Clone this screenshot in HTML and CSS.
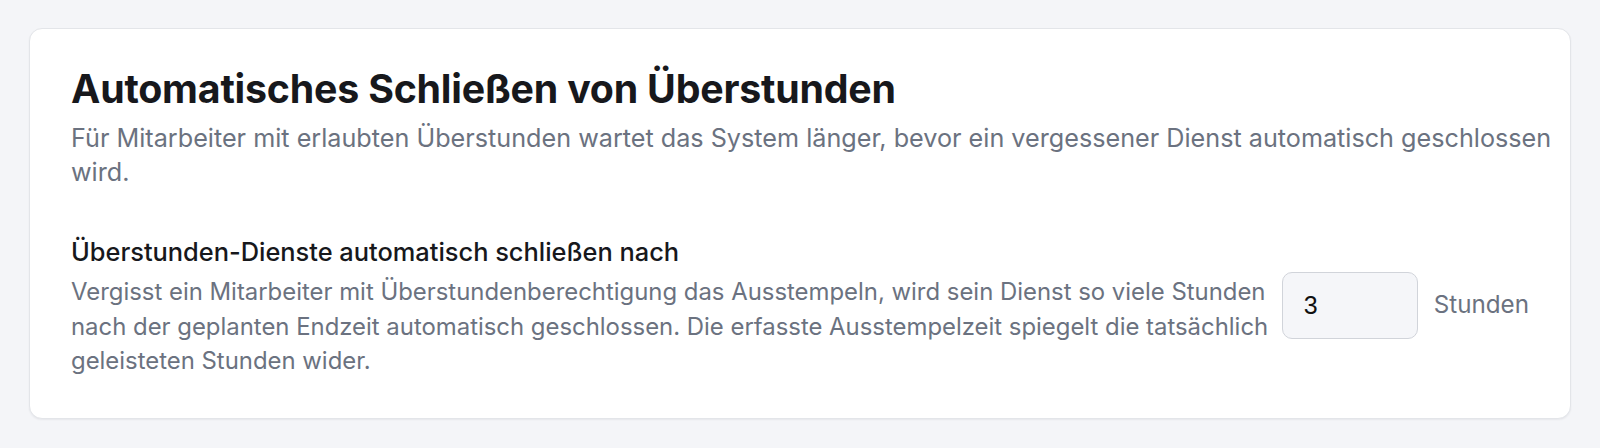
FILE: index.html
```html
<!DOCTYPE html>
<html lang="de">
<head>
<meta charset="utf-8">
<title>Überstunden</title>
<link rel="stylesheet" href="styles.css">
</head>
<body>
  <section class="card">
    <h1 class="card-title">Automatisches Schließen von Überstunden</h1>
    <p class="card-desc">Für Mitarbeiter mit erlaubten Überstunden wartet das System länger, bevor ein vergessener Dienst automatisch geschlossen wird.</p>

    <div class="setting">
      <div class="setting-text">
        <label class="setting-label" for="ot-hours">Überstunden-Dienste automatisch schließen nach</label>
        <p class="setting-help">Vergisst ein Mitarbeiter mit Überstundenberechtigung das Ausstempeln, wird sein Dienst so viele Stunden nach der geplanten Endzeit automatisch geschlossen. Die erfasste Ausstempelzeit spiegelt die tatsächlich geleisteten Stunden wider.</p>
      </div>
      <div class="setting-control">
        <input class="setting-input" id="ot-hours" type="text" value="3">
        <span class="setting-unit">Stunden</span>
      </div>
    </div>
  </section>
</body>
</html>
```

FILE: styles.css
```css
* {
  box-sizing: border-box;
}

body {
  margin: 0;
  padding: 28px 29px;
  background: #f4f5f8;
  font-family: Inter, "Noto Sans", sans-serif;
}

.card {
  background: #ffffff;
  border: 1px solid #e3e5e9;
  border-radius: 13px;
  box-shadow: 0 1px 2px rgba(16, 24, 40, 0.06);
  padding: 36px 16px 39px 41px;
}

.card-title {
  margin: 0;
  font-size: 39.3px;
  line-height: 48px;
  font-weight: 700;
  color: #17181c;
  letter-spacing: -0.2px;
}

.card-desc {
  margin: 9px 0 0;
  font-size: 25.2px;
  line-height: 33.5px;
  color: #6b7280;
}

.setting {
  margin: 47px 25px 0 0;
  display: flex;
  align-items: center;
}

.setting-text {
  flex: 1;
  min-width: 0;
}

.setting-label {
  display: block;
  font-size: 25.4px;
  line-height: 32px;
  font-weight: 500;
  color: #17181c;
}

.setting-help {
  margin: 7px 0 0;
  font-size: 23.9px;
  line-height: 34.5px;
  color: #6b7280;
}

.setting-control {
  display: flex;
  align-items: center;
  gap: 16px;
  margin: 0 0 4px 0;
}

.setting-input {
  width: 136px;
  height: 67px;
  flex: none;
  border: 1px solid #d1d4da;
  border-radius: 10px;
  background: #f5f6f9;
  padding: 0 21px;
  font-family: "Liberation Sans", Arial, sans-serif;
  font-size: 25px;
  color: #111111;
}

.setting-unit {
  font-size: 24.2px;
  line-height: 34.5px;
  color: #6b7280;
  white-space: nowrap;
}
```
